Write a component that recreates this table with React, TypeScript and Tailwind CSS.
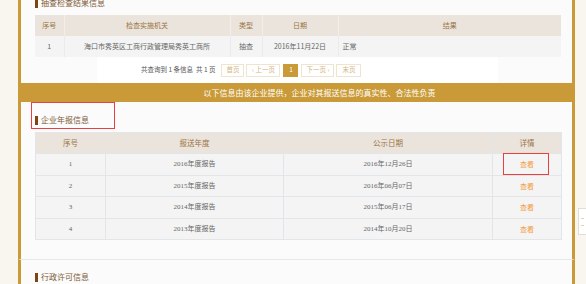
import React from "react";

const gold = "#c99a37";

function SectionHeader({ title }: { title: string }) {
  return (
    <div className="flex items-center h-[10px] gap-[3px]">
      <div className="w-[3px] h-[9px] bg-[#7b4612]" />
      <span className="text-[8px] leading-[10px] text-[#7d5a36]">{title}</span>
    </div>
  );
}

const reports = [
  { n: "1", y: "2016年度报告", d: "2016年12月26日" },
  { n: "2", y: "2015年度报告", d: "2016年06月07日" },
  { n: "3", y: "2014年度报告", d: "2015年06月17日" },
  { n: "4", y: "2013年度报告", d: "2014年10月20日" },
];

export default function App() {
  return (
    <div
      className="relative h-[284px] w-[586px] overflow-hidden bg-[#f9f6ef]"
      style={{ fontFamily: '"Noto Sans CJK SC", "Noto Sans", sans-serif' }}
    >
      <div className="ml-[18px] w-[557px]">
        {/* Section 1 */}
        <div className="border-x-[3px] border-[#c99a37] bg-[#fbfbfb] pl-[14px] pr-[12px]">
          <div className="-mt-[2px]">
            <SectionHeader title="抽查检查结果信息" />
          </div>
          <table className="mt-[7px] w-[526px] table-fixed border-collapse text-[7px] text-[#666]">
            <thead>
              <tr className="h-[21px] bg-[#ebe4dc] text-[#9a7445]">
                <th className="w-[29px] border-r border-[#f3eee8] font-normal">序号</th>
                <th className="w-[166px] border-r border-[#f3eee8] font-normal">检查实施机关</th>
                <th className="w-[32px] border-r border-[#f3eee8] font-normal">类型</th>
                <th className="w-[76px] border-r border-[#f3eee8] font-normal">日期</th>
                <th className="w-[223px] font-normal">结果</th>
              </tr>
            </thead>
            <tbody>
              <tr className="h-[21px] bg-[#f4f4f4]">
                <td className="border-r border-[#ebebeb] text-center">1</td>
                <td className="border-r border-[#ebebeb] text-center">海口市秀英区工商行政管理局秀英工商所</td>
                <td className="border-r border-[#ebebeb] text-center">抽查</td>
                <td className="border-r border-[#ebebeb] text-center">2016年11月22日</td>
                <td className="pl-[4px] text-left">正常</td>
              </tr>
            </tbody>
          </table>
          <div className="ml-[62px] flex h-[26px] w-[401px] items-center bg-white pl-[44px] text-[6.5px] text-[#555]">
            <span className="mr-[6px]">共查询到 1 条信息&nbsp;&nbsp;共 1 页</span>
            <span className="flex h-[13px] w-[23px] items-center justify-center border border-[#f0e4cc] text-[#d3b585]">首页</span>
            <span className="ml-[2px] flex h-[13px] w-[34px] items-center justify-center border border-[#f0e4cc] text-[#d3b585]">‹ 上一页</span>
            <span className="ml-[3px] flex h-[13px] w-[15px] items-center justify-center bg-[#c99a37] text-white">1</span>
            <span className="ml-[3px] flex h-[13px] w-[33px] items-center justify-center border border-[#f0e4cc] text-[#d3b585]">下一页 ›</span>
            <span className="ml-[2px] flex h-[13px] w-[25px] items-center justify-center border border-[#f0e4cc] text-[#d3b585]">末页</span>
          </div>
        </div>

        {/* Banner */}
        <div className="flex h-[19px] items-center justify-center bg-[#c99a37] pl-[46px] text-[8px] text-white" style={{ backgroundColor: gold }}>
          以下信息由该企业提供，企业对其报送信息的真实性、合法性负责
        </div>

        {/* Section 2 */}
        <div className="relative border-b border-x-[3px] border-x-[#c99a37] border-b-[#e6e9eb] bg-[#fbfbfb] pb-[19px] pl-[14px] pr-[12px] pt-[13px]">
          <div className="pointer-events-none absolute left-[10px] top-0 h-[27px] w-[84px] border-[1.5px] border-[#e8403f]" />
          <SectionHeader title="企业年报信息" />
          <table className="mt-[7px] w-[526px] table-fixed border-collapse border border-[#e2e6e8] text-[7px] text-[#666]">
            <thead>
              <tr className="h-[21px] bg-[#ebe4dc] text-[7.5px] text-[#9a7445]">
                <th className="w-[70px] border border-[#e2e6e8] font-normal">序号</th>
                <th className="w-[178px] border border-[#e2e6e8] font-normal">报送年度</th>
                <th className="w-[209px] border border-[#e2e6e8] font-normal">公示日期</th>
                <th className="w-[69px] border border-[#e2e6e8] font-normal">详情</th>
              </tr>
            </thead>
            <tbody style={{ fontFamily: '"Liberation Serif", "Noto Sans CJK SC", serif' }}>
              {reports.map((r, i) => (
                <tr key={r.n} className="h-[21.5px] bg-[#f4f4f4]">
                  <td className="border border-[#e2e6e8] text-center">{r.n}</td>
                  <td className="border border-[#e2e6e8] text-center">{r.y}</td>
                  <td className="border border-[#e2e6e8] text-center">{r.d}</td>
                  <td className="relative border border-[#e2e6e8] text-center text-[#f39a3c]" style={{ fontFamily: '"Noto Sans CJK SC", sans-serif' }}>
                    查看
                    {i === 0 && (
                      <div className="pointer-events-none absolute left-[10px] top-[-1px] h-[22px] w-[46px] border-[1.5px] border-[#e8403f]" />
                    )}
                  </td>
                </tr>
              ))}
            </tbody>
          </table>
        </div>

        {/* Section 3 */}
        <div className="h-[40px] border-x-[3px] border-[#c99a37] bg-[#fbfbfb] pl-[14px] pt-[12px]">
          <SectionHeader title="行政许可信息" />
        </div>
      </div>

      {/* floating side box */}
      <div className="absolute left-[578px] top-[208px] flex h-[27px] w-[14px] flex-col justify-center gap-[6px] border border-[#dedede] bg-white pl-[2px]">
        <div className="h-[1px] w-[3px] bg-[#e8d2a8]" />
        <div className="h-[1px] w-[3px] bg-[#e8d2a8]" />
      </div>
    </div>
  );
}
